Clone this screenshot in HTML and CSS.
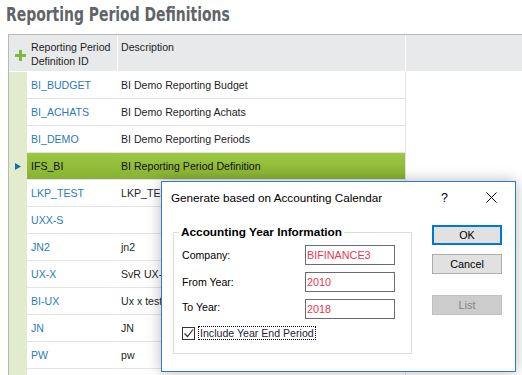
FILE: index.html
```html
<!DOCTYPE html>
<html lang="en">
<head>
  <meta charset="UTF-8" />
  <title>Reporting Period Definitions</title>
  <link rel="stylesheet" href="styles.css">
</head>
<body>
  <h1 class="page-title"><span class="page-title-text">Reporting Period Definitions</span></h1>

  <div class="grid">
    <div class="grid-row grid-head">
      <div class="cell mark">
        <svg class="plus" width="11" height="11" viewBox="0 0 11 11"><path d="M4 0h3v11H4zM0 4h11v3H0z" fill="#7cb940"/></svg>
      </div>
      <div class="cell id">Reporting Period<br>Definition ID</div>
      <div class="cell desc">Description</div>
      <div class="cell rest"></div>
    </div>

    <div class="grid-row"><div class="cell mark"></div><div class="cell id">BI_BUDGET</div><div class="cell desc">BI Demo Reporting Budget</div><div class="cell rest"></div></div>
    <div class="grid-row"><div class="cell mark"></div><div class="cell id">BI_ACHATS</div><div class="cell desc">BI Demo Reporting Achats</div><div class="cell rest"></div></div>
    <div class="grid-row"><div class="cell mark"></div><div class="cell id">BI_DEMO</div><div class="cell desc">BI Demo Reporting Periods</div><div class="cell rest"></div></div>
    <div class="grid-row is-selected">
      <div class="cell mark"><svg width="6" height="7" viewBox="0 0 6 7"><path d="M0 0l6 3.5L0 7z" fill="#1d6fa8"/></svg></div>
      <div class="cell id">IFS_BI</div><div class="cell desc">BI Reporting Period Definition</div><div class="cell rest"></div>
    </div>
    <div class="grid-row"><div class="cell mark"></div><div class="cell id">LKP_TEST</div><div class="cell desc">LKP_TEST</div><div class="cell rest"></div></div>
    <div class="grid-row"><div class="cell mark"></div><div class="cell id">UXX-S</div><div class="cell desc"></div><div class="cell rest"></div></div>
    <div class="grid-row"><div class="cell mark"></div><div class="cell id">JN2</div><div class="cell desc">jn2</div><div class="cell rest"></div></div>
    <div class="grid-row"><div class="cell mark"></div><div class="cell id">UX-X</div><div class="cell desc">SvR UX-X test</div><div class="cell rest"></div></div>
    <div class="grid-row"><div class="cell mark"></div><div class="cell id">BI-UX</div><div class="cell desc">Ux x test</div><div class="cell rest"></div></div>
    <div class="grid-row"><div class="cell mark"></div><div class="cell id">JN</div><div class="cell desc">JN</div><div class="cell rest"></div></div>
    <div class="grid-row"><div class="cell mark"></div><div class="cell id">PW</div><div class="cell desc">pw</div><div class="cell rest"></div></div>
    <div class="grid-row filler"><div class="cell mark"></div><div class="cell"></div><div class="cell desc"></div><div class="cell rest"></div></div>
  </div>

  <div class="dialog">
    <div class="dialog-title">
      <span class="dialog-caption">Generate based on Accounting Calendar</span>
      <span class="dialog-help">?</span>
      <svg class="dialog-close" width="11" height="11" viewBox="0 0 11 11"><path d="M0.5 0.5l10 10M10.5 0.5l-10 10" stroke="#000" stroke-width="1"/></svg>
    </div>
    <div class="dialog-body">
      <fieldset class="group">
        <legend>Accounting Year Information</legend>
        <div class="field">
          <span class="field-label">Company:</span>
          <span class="field-input">BIFINANCE3</span>
        </div>
        <div class="field">
          <span class="field-label">From Year:</span>
          <span class="field-input">2010</span>
        </div>
        <div class="field">
          <span class="field-label field-label--high">To Year:</span>
          <span class="field-input">2018</span>
        </div>
        <div class="check-row">
          <span class="check-box">
            <svg width="11" height="11" viewBox="0 0 11 11"><path d="M1.5 5.5l3 3 5.5-7" fill="none" stroke="#333" stroke-width="1.2"/></svg>
          </span>
          <span class="check-label">Include Year End Period</span>
        </div>
      </fieldset>
      <div class="buttons">
        <div class="btn btn-default">OK</div>
        <div class="btn btn-cancel">Cancel</div>
        <div class="btn btn-disabled">List</div>
      </div>
    </div>
  </div>
</body>
</html>
```

FILE: styles.css
```css
:root {
  --grid-line: #e4e4e4;
  --head-bg: #e8e9eb;
  --mark-bg: #e2ebcd;
  --link: #2b7bb9;
  --select-top: #9cc742;
  --select-bottom: #88b233;
}

body {
  margin: 0;
  height: 375px;
  overflow: hidden;
  position: relative;
  background: #fff;
  font-family: "Liberation Sans", Arial, sans-serif;
  color: #1e1e1e;
}

.page-title {
  margin: 0;
  height: 34px;
  box-sizing: border-box;
  padding: 2px 0 0 6px;
  font-family: "DejaVu Sans Condensed", "Liberation Sans", sans-serif;
  font-weight: bold;
  font-size: 19px;
  line-height: 24px;
  color: #5e6467;
}

/* the original face is a narrow grotesque, squeeze the condensed one */
.page-title-text {
  display: inline-block;
  transform: scaleX(0.815);
  transform-origin: left center;
  white-space: nowrap;
}

.grid {
  margin-left: 8px;
  border-left: 1px solid #b8b8b8;
  border-top: 1px solid #b8b8b8;
}

.grid-row {
  display: grid;
  grid-template-columns: 18px 90px 289px 1fr;
  height: 27px;
  font-size: 10.6px;
  line-height: 26px;
}

.cell {
  box-sizing: border-box;
  white-space: nowrap;
  overflow: hidden;
}

.mark {
  background: var(--mark-bg);
}

.id {
  padding-left: 4px;
  color: var(--link);
  border-bottom: 1px solid var(--grid-line);
}

.desc {
  padding-left: 3px;
  border-left: 1px solid transparent;
  border-right: 1px solid var(--grid-line);
  border-bottom: 1px solid var(--grid-line);
}

.grid-head {
  height: 37px;
  background: var(--head-bg);
  line-height: 14px;
  color: #1e1e1e;
}

.grid-head .cell {
  padding-top: 5px;
  border-bottom: 1px solid #fff;
}

.grid-head .mark {
  background: var(--head-bg);
  padding: 15px 0 0 6px;
}

.grid-head .id {
  color: #1e1e1e;
}

.grid-head .desc {
  border-left-color: #fff;
  border-right-color: #fff;
}

.plus {
  display: block;
}

.is-selected .id,
.is-selected .desc {
  color: #111;
  background: linear-gradient(var(--select-top), var(--select-bottom));
}

.is-selected .mark {
  display: flex;
  align-items: center;
  padding-left: 6px;
}

.is-selected .mark svg {
  display: block;
}

.filler {
  height: 6px;
}

.filler .cell {
  border-bottom: none;
}

/* dialog */

.dialog {
  position: absolute;
  left: 161px;
  top: 181px;
  width: 355px;
  height: 191px;
  box-sizing: border-box;
  border: 1px solid #2b7bcf;
  background: #fff;
  box-shadow: 0 0 14px rgba(0, 0, 0, 0.28);
  color: #000;
}

.dialog-title {
  display: flex;
  align-items: center;
  height: 31px;
  padding-left: 9px;
  font-size: 11.7px;
}

.dialog-caption {
  flex: 1;
}

.dialog-help {
  font-size: 12.5px;
  margin-right: 38px;
}

.dialog-close {
  display: block;
  margin-right: 18px;
}

.dialog-body {
  display: flex;
  padding: 12px 13px 0 11px;
}

.group {
  width: 239px;
  box-sizing: border-box;
  margin: 0;
  padding: 6px 7px 13px 8px;
  border: 1px solid #dcdcdc;
  font-size: 10.6px;
}

.group legend {
  margin-left: -3px;
  padding: 0 2px;
  font-weight: bold;
  font-size: 11.8px;
  line-height: 14px;
}

.field {
  display: flex;
  align-items: center;
  height: 20px;
  margin-bottom: 7px;
}

.field-label {
  width: 123px;
}

.field-label--high {
  padding-bottom: 4px;
}

.field-input {
  width: 90px;
  height: 20px;
  box-sizing: border-box;
  border: 1px solid #6b6b6b;
  padding: 1px 1px 0;
  line-height: 16px;
  font-size: 10.8px;
  color: #e8384f;
}

.check-row {
  display: flex;
  align-items: center;
  margin-top: 7px;
  height: 14px;
}

.check-box {
  width: 13px;
  height: 13px;
  box-sizing: border-box;
  border: 1px solid #333;
  display: flex;
  align-items: center;
  justify-content: center;
}

.check-box svg {
  display: block;
}

.check-label {
  margin-left: 3px;
  padding: 0 1px;
  border: 1px dotted #000;
  line-height: 12px;
  color: #1c1c3c;
}

.buttons {
  margin-left: 20px;
  width: 70px;
}

.btn {
  height: 20px;
  box-sizing: border-box;
  border: 1px solid #adadad;
  background: #e1e1e1;
  font-size: 10.8px;
  line-height: 18px;
  text-align: center;
  color: #000;
}

.btn-default {
  border: 2px solid #0078d7;
  line-height: 16px;
}

.btn-cancel {
  margin-top: 9px;
}

.btn-disabled {
  margin-top: 21px;
  background: #cccccc;
  border-color: #bfbfbf;
  color: #838383;
}
```
